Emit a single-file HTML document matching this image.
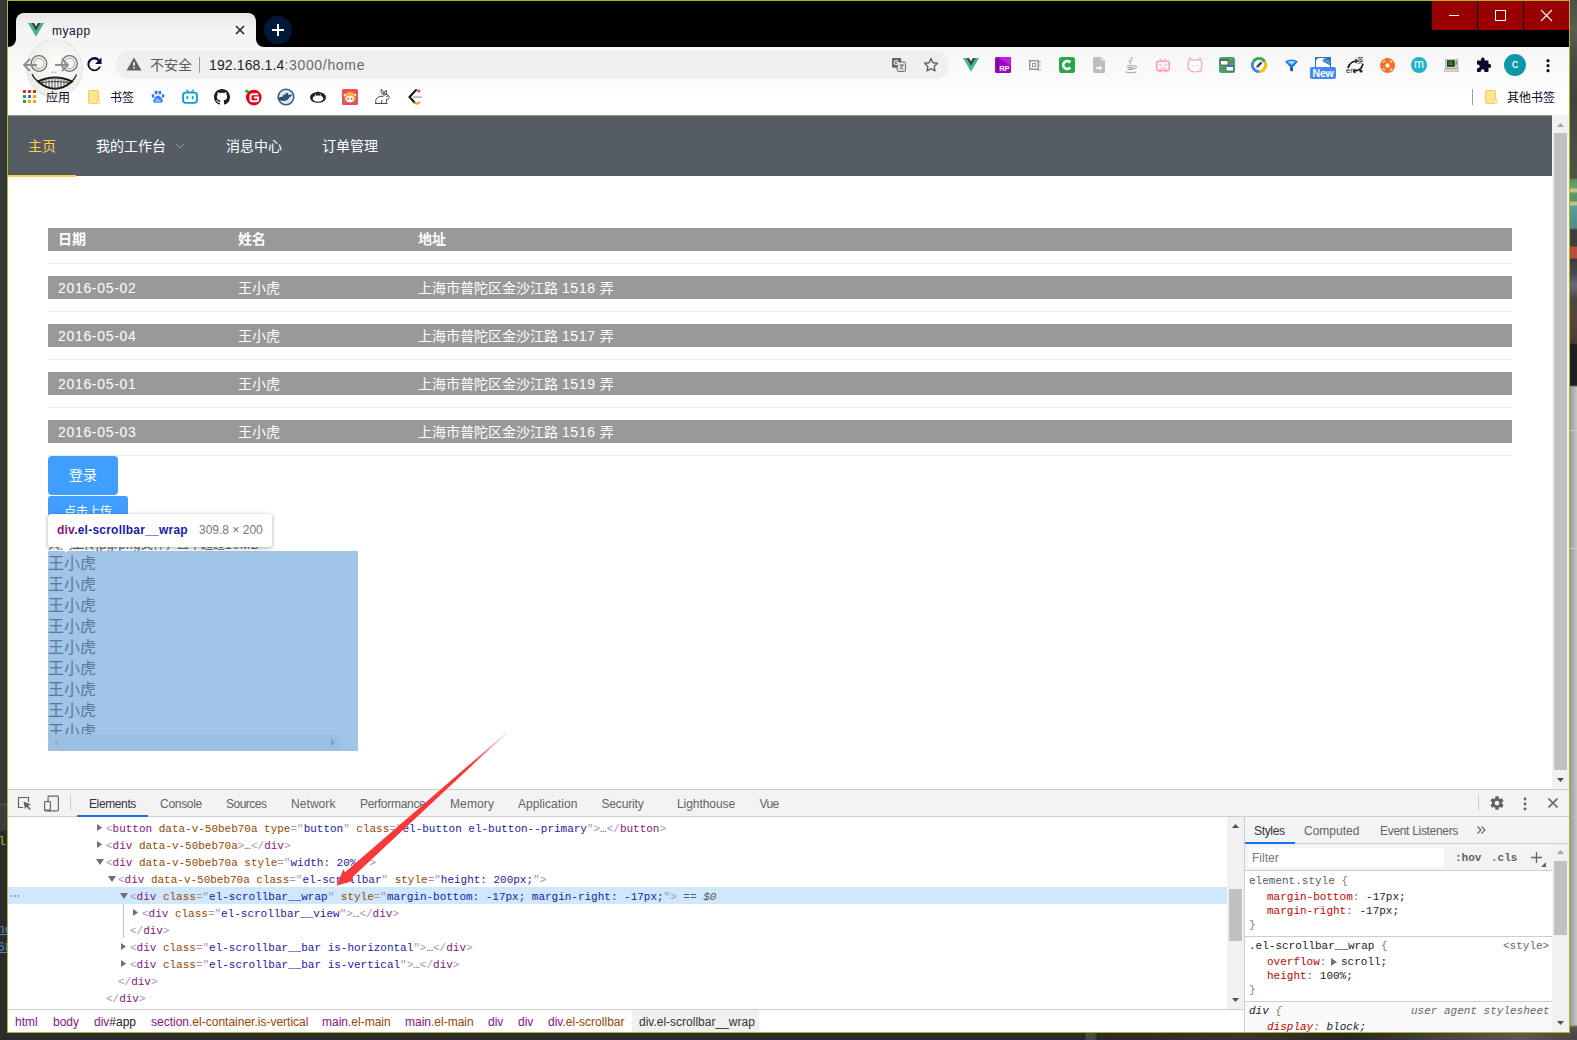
<!DOCTYPE html>
<html lang="zh-CN">
<head>
<meta charset="utf-8">
<title>myapp</title>
<style>
*{box-sizing:border-box;margin:0;padding:0}
html,body{width:1577px;height:1040px;overflow:hidden;background:#2b2b2b}
body{position:relative;font-family:"Liberation Sans","Noto Sans CJK SC",sans-serif;font-size:12px;color:#222}
.abs{position:absolute}
svg{display:block}
/* desktop */
#deskL{left:0;top:0;width:7px;height:1040px;overflow:hidden;background:linear-gradient(#36393b 0,#36393b 803px,#4a4d4f 804px,#4a4d4f 805px,#3c3f41 806px,#3c3f41 830px,#2b2b2b 831px)}
#deskR{left:1570px;top:0;width:7px;height:1040px;background:linear-gradient(#4a4e44 0,#5a5e50 30px,#474b41 60px,#3f433b 100px,#4a4e44 150px,#4e5548 178px,#5f9460 180px,#6aa067 188px,#c8c090 189px,#c8c090 192px,#5f9460 193px,#5f9460 201px,#c0c090 202px,#c0c090 205px,#58a098 206px,#4f8a88 228px,#3c3e3c 230px,#3c3e3c 246px,#b85038 247px,#b85038 258px,#3a3a3a 259px,#4a4a50 275px,#6a6a78 285px,#4a4440 300px,#5a443a 320px,#4a3a34 343px,#1e1e20 345px,#1e1e20 385px,#a9a9a9 387px,#a9a9a9 1025px,#5a5650 1027px,#3a3632 1040px)}
#deskR2{left:1570px;top:387px;width:7px;height:638px;background:linear-gradient(90deg,#9a9a9a,#c6c6c6)}
#deskB{left:0;top:1033px;width:1577px;height:7px;background:linear-gradient(90deg,#2b2b2b 0,#2b2b2b 1085px,#4a4a4a 1086px,#4a4a4a 1095px,#2e2826 1097px,#3a3430 1250px,#2a2624 1350px,#4a4540 1450px,#5e5852 1520px,#4a4540 1577px)}
#win{left:7px;top:0;width:1563px;height:1033px;border:1px solid #a9b81c;background:#fff}
/* chrome */
#titlebar{left:8px;top:1px;width:1561px;height:46px;background:#000}
#toolbar{left:8px;top:47px;width:1561px;height:68px;background:linear-gradient(#f6f6f6,#fafafa 40%,#fff 75%)}

#tab{left:16px;top:13px;width:240px;height:34px;border-radius:8px 8px 0 0;background:linear-gradient(#e6e6e6,#f3f3f3 45%,#f6f6f6)}
.foot{width:8px;height:8px;top:39px;overflow:hidden}
.foot i{position:absolute;width:16px;height:16px;border-radius:50%;background:#000;top:-8px}
#tabtitle{left:52px;top:24px;font-size:12px;line-height:14px;color:#1a1030;letter-spacing:.55px}
#newtab{left:264px;top:16px;width:28px;height:28px;border-radius:50%;background:#00193b}
.wc{top:1px;height:29px;background:#900}
#pill{left:116px;top:51px;width:833px;height:28px;border-radius:14px;background:#efefef}
.bm{font-size:12px;line-height:14px;color:#06062c;top:91px}

#page{left:8px;top:115px;width:1544px;height:674px;background:#fff;overflow:hidden;font-family:"Liberation Sans","Noto Sans CJK SC",sans-serif}
#nav{left:0;top:0;width:1544px;height:61px;background:#545c64;border-top:1px solid #8b9095}
.mi{top:0;height:61px;line-height:60px;font-size:14px;color:#fff;padding-left:20px}
.band{left:40px;width:1464px;height:23px;background:#999;color:#fff;font-size:14px;line-height:24px}
.band span{position:absolute;top:0;white-space:nowrap}
.sep{left:40px;width:1464px;height:1px;background:#ebeef5}
.c1{left:10px}.c2{left:190px}.c3{left:370px}
.num{letter-spacing:.68px}
#vsb{left:1552px;top:115px;width:17px;height:674px;background:#f1f1f1}

#dt{left:8px;top:789px;width:1561px;height:243px;background:#fff;border-top:1px solid #cbcbcb;overflow:hidden;font-size:12px}
#dtbar{left:0;top:0;width:1561px;height:27px;background:#f3f3f3;border-bottom:1px solid #cdcdcd}
.tb{top:6px;line-height:16px;color:#5f6368;white-space:nowrap;font-size:12px}
#tree{left:0;top:27px;width:1219px;height:192px;font-family:"Liberation Mono",monospace;font-size:11px;white-space:pre;overflow:hidden}
.ln{position:absolute;left:0;height:17px;line-height:17px;width:1219px}
.ln b{font-weight:normal;position:absolute;top:2px;letter-spacing:-.015px}
.t{color:#881280}.a{color:#994500}.v{color:#1a1aa8}.p{color:#a894a6}.g{color:#5a5a5a}
.tri{position:absolute;top:5px}
#crumbs{left:0;top:219px;width:1236px;height:24px;border-top:1px solid #cdcdcd;background:#fff;font-size:12px;line-height:24px}
#crumbs span{position:absolute;top:0;white-space:nowrap}
.cp{color:#881280}.co{color:#994500}
#sty{left:1236px;top:27px;width:325px;height:216px;border-left:1px solid #cdcdcd;background:#fff;overflow:hidden}
.mono{font-family:"Liberation Mono",monospace;font-size:11px;white-space:pre;position:absolute;line-height:14px}
.red{color:#c80000}
/* SECTION-CSS */
</style>
</head>
<body>
<div class="abs" id="deskL"><span class="abs" style="left:-2px;top:834px;font:13px/16px 'Liberation Mono',monospace;color:#a9b21f">ll</span><span class="abs" style="left:-3px;top:922px;font:13px/16px 'Liberation Mono',monospace;color:#4a88c7;text-decoration:underline">nd</span><span class="abs" style="left:-3px;top:940px;font:13px/16px 'Liberation Mono',monospace;color:#4a88c7;text-decoration:underline">68</span></div>
<div class="abs" id="deskR"></div><div class="abs" id="deskR2"><div class="abs" style="left:0;top:43px;width:7px;height:1px;background:#d0d0d0"></div><div class="abs" style="left:0;top:161px;width:7px;height:1px;background:#d0d0d0"></div></div>
<div class="abs" id="deskB"></div>
<div class="abs" id="win"></div>
<div class="abs" id="titlebar"></div>
<div class="abs" id="toolbar"></div>

<div class="abs" id="tab"></div>
<div class="abs foot" style="left:8px;background:#f6f6f6"><i style="left:-8px"></i></div>
<div class="abs foot" style="left:256px;background:#f6f6f6"><i style="left:0"></i></div>
<svg class="abs" style="left:28px;top:23px" width="16" height="14" viewBox="0 0 16 14"><path d="M0 0h3.2L8 8.3 12.8 0H16L8 13.8z" fill="#41b883"/><path d="M3.2 0h2.9L8 3.3 9.9 0h2.9L8 8.3z" fill="#35495e"/></svg>
<div class="abs" id="tabtitle">myapp</div>
<svg class="abs" style="left:235px;top:25px" width="10" height="10" viewBox="0 0 10 10"><path d="M1 1l8 8M9 1l-8 8" stroke="#222" stroke-width="1.5"/></svg>
<div class="abs" id="newtab"><svg width="28" height="28" viewBox="0 0 28 28"><path d="M14 8v12M8 14h12" stroke="#fff" stroke-width="2"/></svg></div>
<div class="abs wc" style="left:1432px;width:45px"><svg width="45" height="29"><path d="M17 14.5h10" stroke="#fff" stroke-width="1"/></svg></div>
<div class="abs wc" style="left:1478px;width:45px"><svg width="45" height="29"><rect x="17.5" y="9.5" width="10" height="10" fill="none" stroke="#fff" stroke-width="1"/></svg></div>
<div class="abs wc" style="left:1524px;width:45px"><svg width="45" height="29"><path d="M17 9l11 11M28 9l-11 11" stroke="#fff" stroke-width="1.1"/></svg></div>
<!-- nav buttons -->
<div class="abs" style="left:27px;top:40px;width:55px;height:57px;border-radius:50%;background:radial-gradient(circle at 55% 40%,#fcfcfa,#eeeee8 70%,#dfdfd8);box-shadow:0 0 0 .6px #d9c9d9"></div>
<svg class="abs" style="left:27px;top:40px" width="55" height="57" viewBox="0 0 55 57">
<circle cx="12" cy="23.500" r="7.800" fill="none" stroke="#6e6e6e" stroke-width="1.300"/><circle cx="12" cy="23.500" r="5.200" fill="none" stroke="#9a9a9a" stroke-width=".9"/>
<circle cx="42.500" cy="23.500" r="7.800" fill="none" stroke="#6e6e6e" stroke-width="1.300"/><circle cx="42.500" cy="23.500" r="5.200" fill="none" stroke="#9a9a9a" stroke-width=".9"/>
<path d="M5 34q2 5 6.500 7.500M49.500 34.500q-1.500 4.500-5 7" fill="none" stroke="#2a2a2a" stroke-width="1.300"/>
<path d="M11 41.500Q28 33.300 45 41.500Q28 56.100 11 41.500z" fill="#f0f0ec" stroke="#1c1c1c" stroke-width="2"/>
<path d="M16 41v3M19 40v5.500M22 39.500v7.500M25 39v8.500M28 38.500v9.500M31 39v8.500M34 39.500v7.500M37 40v5.500M40 41v3" stroke="#333" stroke-width=".8"/>
<path d="M13 42.500Q28 40.500 43 42.500" fill="none" stroke="#333" stroke-width=".9"/>
<rect x="24.800" y="31.500" width="1.600" height="1.600" fill="#a8a8b8"/><rect x="27.800" y="31.500" width="1.600" height="1.600" fill="#a8a8b8"/>
</svg>
<svg class="abs" style="left:22px;top:57px" width="16" height="16" viewBox="0 0 16 16"><path d="M15 8H2.500M8 2L2 8l6 6" fill="none" stroke="#8c8c9c" stroke-width="1.800"/></svg>
<svg class="abs" style="left:54px;top:57px" width="16" height="16" viewBox="0 0 16 16"><path d="M1 8h12.500M8 2l6 6-6 6" fill="none" stroke="#8c8c9c" stroke-width="1.800"/></svg>
<svg class="abs" style="left:86px;top:56px" width="16" height="17" viewBox="0 0 16 17"><path d="M13.600 3.400A7 7 0 1 0 15 10.500h-2A5 5 0 1 1 12 5l-3 3h6.500V1.500z" fill="#0b0b2d"/></svg>
<div class="abs" id="pill"></div>
<svg class="abs" style="left:126px;top:57px" width="16" height="14" viewBox="0 0 16 14"><path d="M8 .5l7.500 13H.5z" fill="#5f6368"/><rect x="7.200" y="5" width="1.600" height="4" fill="#efefef"/><rect x="7.200" y="10" width="1.600" height="1.600" fill="#efefef"/></svg>
<div class="abs" style="left:150px;top:56px;font-size:14px;line-height:18px;color:#5a5a5a">不安全</div>
<div class="abs" style="left:199px;top:57px;width:1px;height:16px;background:#999"></div>
<div class="abs" style="left:209px;top:56px;font-size:14px;line-height:18px;color:#222;letter-spacing:.13px">192.168.1.4<span style="color:#6a6a6a;letter-spacing:.68px">:3000/home</span></div>

<!-- omnibox right icons -->
<svg class="abs" style="left:892px;top:58px" width="14" height="14" viewBox="0 0 16 16"><rect x="0" y="0" width="10.500" height="11" rx="1.500" fill="#5f6368"/><rect x="6" y="4.500" width="9.500" height="11" rx="1.500" fill="#e4e4e4" stroke="#5f6368" stroke-width="1.100"/><text x="1.800" y="8.500" font-size="7.500" font-weight="bold" fill="#fff" font-family="Liberation Sans,sans-serif">G</text><path d="M8.500 8h5M11 7v1M9 13.500l3.500-5.500M9.500 9l3.500 4.500" stroke="#5f6368" stroke-width="1" fill="none"/></svg>
<svg class="abs" style="left:923px;top:57px" width="16" height="16" viewBox="0 0 18 18"><path d="M9 1.800l2.200 4.700 5.100.600-3.800 3.500 1 5-4.500-2.500-4.500 2.500 1-5L1.700 7.100l5.100-.600z" fill="none" stroke="#5f6368" stroke-width="1.600" stroke-linejoin="round"/></svg>
<!-- extensions -->
<svg class="abs" style="left:963px;top:58px" width="16" height="14" viewBox="0 0 16 14"><path d="M0 0h3.200L8 8.300 12.800 0H16L8 13.800z" fill="#41b883"/><path d="M3.200 0h2.900L8 3.300 9.900 0h2.900L8 8.300z" fill="#35495e"/></svg>
<svg class="abs" style="left:995px;top:57px" width="16" height="16" viewBox="0 0 16 16"><rect width="16" height="16" rx="1.500" fill="#a305c4"/><path d="M3 0h13v9z" fill="#c21fe0"/><rect x="2.200" y="0" width="1" height="16" fill="#5a0070"/><text x="4.200" y="14" font-size="7.500" font-weight="bold" fill="#fff" font-family="Liberation Sans,sans-serif">RP</text></svg>
<svg class="abs" style="left:1029px;top:59px" width="13" height="12" viewBox="0 0 13 12"><rect x=".750" y="1.750" width="8.500" height="8.500" fill="none" stroke="#9a9a9a" stroke-width="1.500"/><rect x="3.500" y="4.500" width="3" height="3" fill="none" stroke="#9a9a9a" stroke-width="1"/><path d="M11 2v2M11 5.500v1.500M8 11h4" stroke="#aaa" stroke-width="1.200"/></svg>
<svg class="abs" style="left:1059px;top:57px" width="16" height="16" viewBox="0 0 16 16"><rect width="16" height="16" rx="2.800" fill="#2aa64b"/><path d="M12.300 4.600A5.300 5.300 0 1 0 12.300 11.400L10.100 9.600A2.500 2.500 0 1 1 10.100 6.400z" fill="#fff"/><circle cx="8" cy="8" r="1" fill="#2aa64b"/></svg>
<svg class="abs" style="left:1093px;top:57px" width="12" height="16" viewBox="0 0 12 16"><path d="M0 1.500Q0 0 1.500 0H8l4 4v10.500q0 1.500-1.500 1.500h-9Q0 16 0 14.500z" fill="#bdbdbd"/><path d="M8 0l4 4H8z" fill="#dedede"/><path d="M3 10h3.500V8l3 3-3 3v-2H3z" fill="#f4f4f4"/></svg>
<svg class="abs" style="left:1124px;top:56px" width="14" height="18" viewBox="0 0 14 18"><path d="M7.500 1q1.800 2-.500 3.800t-.300 3.400M5.500 3.500q1.200 1.600-.300 3" fill="none" stroke="#a8a8a8" stroke-width="1"/><path d="M3 9.800h7.500q2.300 0 1.800 1.600t-2.300 1M3.200 11.600h6.600M3.800 13.400h5.400" fill="none" stroke="#a8a8a8" stroke-width="1.100"/><path d="M1.500 15.800q5.500 1.800 11 0" fill="none" stroke="#b4b4b4" stroke-width="1.300"/></svg>
<svg class="abs" style="left:1155px;top:57px" width="16" height="16" viewBox="0 0 16 16"><path d="M5 1.200L7.200 4M11 1.200L8.800 4" stroke="#ff9fb8" stroke-width="1" fill="none"/><rect x="1.700" y="4.200" width="12.600" height="9.300" rx="1.800" fill="#fff5f8" stroke="#ff8fab" stroke-width="1.300"/><path d="M4.300 7.600l2.300.800M11.700 7.600l-2.300.800M5.500 11q1.200 1 2.500 0q1.300 1 2.500 0" stroke="#ff8fab" stroke-width=".9" fill="none"/><path d="M4 14.800h2M10 14.800h2" stroke="#ff8fab" stroke-width="1.100"/></svg>
<svg class="abs" style="left:1186px;top:56px" width="18" height="18" viewBox="0 0 18 18"><path d="M3.800 2.200Q5 3 6.200 4.300q2.800-1 5.600 0Q13 3 14.200 2.200q1.800 3.300 1.700 7.300.100 6.500-6.900 6.500T2.100 9.500Q2 5.500 3.800 2.200z" fill="#fff" stroke="#ff9db5" stroke-width="1.200" stroke-linejoin="round"/><path d="M5.300 9.300l2.300.400M12.700 9.300l-2.300.400" stroke="#ffb3c6" stroke-width=".9"/><circle cx="15.300" cy="15.300" r=".8" fill="#ff9db5"/></svg>
<svg class="abs" style="left:1219px;top:57px" width="16" height="16" viewBox="0 0 16 16"><rect width="16" height="16" rx="2.500" fill="#3aa76d"/><rect x="1.500" y="2.500" width="7.500" height="5.500" fill="#fff" stroke="#555" stroke-width=".8"/><rect x="1.500" y="2.500" width="7.500" height="1.500" fill="#666"/><rect x="7" y="8.500" width="7.500" height="5.500" fill="#fff" stroke="#555" stroke-width=".8"/><rect x="7" y="8.500" width="7.500" height="1.500" fill="#3b6fd6"/><path d="M10.500 4.500h4M2 11.500h4" stroke="#e33" stroke-width="1.200"/></svg>
<svg class="abs" style="left:1250px;top:56px" width="18" height="18" viewBox="0 0 18 18"><circle cx="9" cy="9" r="6.600" fill="#fff"/><path d="M3.280 5.700A6.600 6.600 0 0 1 14.720 5.700" fill="none" stroke="#34a853" stroke-width="2.900"/><path d="M14.720 5.700A6.600 6.600 0 0 1 9 15.600" fill="none" stroke="#fbbc05" stroke-width="2.900"/><path d="M9 15.600A6.600 6.600 0 0 1 3.280 5.700" fill="none" stroke="#4285f4" stroke-width="2.900"/><path d="M6.200 11.800l.6-2.200 4-4 1.600 1.600-4 4z" fill="#3c4043"/></svg>
<svg class="abs" style="left:1285px;top:59px" width="13" height="13" viewBox="0 0 13 13"><path d="M0 2.500Q6.500-1.500 13 2.500L7.600 8.500V12.500L5.400 11.500V8.500z" fill="#1877d8"/><path d="M2.500 2.800Q6.500.500 10.500 2.800L6.500 6z" fill="#9fd0ff"/><path d="M5.400 8.500h2.200v4l-2.200-1z" fill="#0a3f8a"/></svg>
<svg class="abs" style="left:1315px;top:57px" width="16" height="10" viewBox="0 0 16 10"><rect width="16" height="10" fill="#2b76ba"/><path d="M1 10V4.500Q1 1 5 1h6Q6.500 2.500 8 4.500q3 1.500 7 4V10z" fill="#fdfdfd"/><path d="M7 3.500q4-2 7.800 0V8Q12 4.500 7 3.500z" fill="#4e9ad4"/></svg>
<div class="abs" style="left:1310px;top:67px;width:26px;height:12px;border-radius:2px;background:#4688f1;color:#fff;font-size:10.500px;font-weight:bold;line-height:12px;text-align:center;letter-spacing:-.2px">New</div>
<svg class="abs" style="left:1346px;top:56px" width="19" height="19" viewBox="0 0 19 19"><path d="M2 12q2-7 9-7M17 8q-2 7-9 7" fill="none" stroke="#111" stroke-width="1.600"/><path d="M9.500 3l2 2-2 2M9.500 13l-2 2 2 2" fill="none" stroke="#222" stroke-width="1.100"/><text x="0" y="17" font-size="7.500" fill="#222" font-family="Liberation Sans,sans-serif">en</text><text x="11" y="6.500" font-size="6.500" fill="#222" font-family="Liberation Sans,Noto Sans CJK SC,sans-serif">英</text><circle cx="15" cy="15" r="1.600" fill="#222"/></svg>
<svg class="abs" style="left:1379.500px;top:57.500px" width="15" height="15" viewBox="0 0 15 15"><circle cx="7.500" cy="7.500" r="7.500" fill="#f36f21"/><circle cx="7.500" cy="7.500" r="2.300" fill="#fdeee4"/><path d="M3.200 4.300l1.300-1.300M10.500 3l1.300 1.300M3.200 10.700l1.300 1.300M10.500 12l1.300-1.300" stroke="#fde4d4" stroke-width="1.500" stroke-linecap="round"/></svg>
<div class="abs" style="left:1411px;top:57px;width:16px;height:16px;border-radius:50%;background:#1cb4c6;color:#fff;font-size:12px;line-height:14px;text-align:center">m</div>
<svg class="abs" style="left:1443.500px;top:58.500px" width="15.500" height="13.800" viewBox="0 0 18 16"><rect x="2" y="0" width="14" height="11" fill="#d4d0be" stroke="#8a8675" stroke-width=".6"/><rect x="3.500" y="1.500" width="9" height="7.500" fill="#1d3b1d"/><path d="M5 4h4.500M5 6h5.500" stroke="#4cd04c" stroke-width=".9"/><path d="M1 11.500h16l1 3.500H0z" fill="#dedacb" stroke="#8a8675" stroke-width=".5"/><rect x="13.500" y="2.500" width="1.500" height="4" fill="#8a8675"/></svg>
<svg class="abs" style="left:1475px;top:57px" width="16" height="17" viewBox="0 0 16 17"><path d="M6 2.200a1.800 1.800 0 0 1 3.600 0V3.500h3.200q.7 0 .7.700v2.800h.8a1.900 1.900 0 0 1 0 3.800h-.8v3.500q0 .7-.7.700H9.500v-.8a1.900 1.900 0 0 0-3.800 0v.8H2.700q-.7 0-.7-.700v-3.100h.8a1.900 1.900 0 0 0 0-3.800H2V4.200q0-.7.700-.7H6z" fill="#0a0a2e"/></svg>
<div class="abs" style="left:1504px;top:54px;width:22px;height:22px;border-radius:50%;background:#0d97a7;color:#fff;font-size:13px;line-height:20px;text-align:center">c</div>
<svg class="abs" style="left:1545px;top:58px" width="6" height="16" viewBox="0 0 6 16"><circle cx="3" cy="2.700" r="1.600" fill="#0a0a2e"/><circle cx="3" cy="7.700" r="1.600" fill="#0a0a2e"/><circle cx="3" cy="12.700" r="1.600" fill="#0a0a2e"/></svg>

<!-- bookmarks -->
<svg class="abs" style="left:23px;top:90px" width="13" height="13" viewBox="0 0 13 13"><g><rect x="0" y="0" width="3" height="3" fill="#ea2a1c"/><rect x="5" y="0" width="3" height="3" fill="#ea2a1c"/><rect x="10" y="0" width="3" height="3" fill="#ea2a1c"/><rect x="0" y="5" width="3" height="3" fill="#2e9b47"/><rect x="5" y="5" width="3" height="3" fill="#1f7de6"/><rect x="10" y="5" width="3" height="3" fill="#f4a70e"/><rect x="0" y="10" width="3" height="3" fill="#2e9b47"/><rect x="5" y="10" width="3" height="3" fill="#f4a70e"/><rect x="10" y="10" width="3" height="3" fill="#f4a70e"/></g></svg>
<div class="abs bm" style="left:46px">应用</div>
<svg class="abs" style="left:88px;top:90px" width="12" height="14" viewBox="0 0 12 14"><path d="M.500 1.500Q.500.500 1.500.500h8q1 0 1 1v11q0 1-1 1h-8q-1 0-1-1z" fill="#fde595" stroke="#f5cd5a" stroke-width="1"/><rect x="9" y="9.500" width="2.500" height="4" fill="#fff3c0" stroke="#f5cd5a" stroke-width=".7"/></svg>
<div class="abs bm" style="left:110px">书签</div>
<svg class="abs" style="left:151px;top:90px" width="14" height="14" viewBox="0 0 16 16"><g fill="#2f7bf5"><ellipse cx="5.800" cy="2.800" rx="1.700" ry="2.300"/><ellipse cx="10.200" cy="2.800" rx="1.700" ry="2.300"/><ellipse cx="2.300" cy="6.800" rx="1.600" ry="2.100" transform="rotate(-20 2.300 6.800)"/><ellipse cx="13.700" cy="6.800" rx="1.600" ry="2.100" transform="rotate(20 13.700 6.800)"/><path d="M8 6.200c2 0 2.600 1.800 4 3.200s2 2.600 1 4.200-3.200.9-5 .9-4 .7-5-.9 0-2.800 1-4.200S6 6.200 8 6.200z"/></g><text x="4.600" y="13.300" font-size="5.500" fill="#fff" font-family="Liberation Sans,sans-serif">du</text></svg>
<svg class="abs" style="left:182px;top:89px" width="16" height="15.200" viewBox="0 0 18 17"><path d="M5 .800L7.500 3.800M13 .800L10.500 3.800" stroke="#00a1d6" stroke-width="1.500" fill="none"/><rect x="1.200" y="4" width="15.600" height="11.500" rx="2.800" fill="#fff" stroke="#00a1d6" stroke-width="2"/><rect x="5" y="8" width="2" height="3.200" fill="#00a1d6"/><rect x="11" y="8" width="2" height="3.200" fill="#00a1d6"/></svg>
<svg class="abs" style="left:214px;top:89px" width="16" height="16" viewBox="0 0 16 16"><path fill="#1b1f23" d="M8 0C3.580 0 0 3.580 0 8c0 3.540 2.290 6.530 5.470 7.590.4.070.55-.17.550-.38 0-.19-.010-.82-.010-1.490-2.010.37-2.530-.49-2.690-.94-.09-.23-.48-.94-.82-1.130-.28-.15-.68-.52-.010-.53.630-.010 1.080.58 1.230.82.720 1.210 1.870.87 2.330.66.070-.52.280-.87.510-1.070-1.780-.2-3.640-.89-3.640-3.950 0-.87.310-1.590.82-2.150-.08-.2-.36-1.020.08-2.120 0 0 .67-.21 2.200.82.640-.18 1.320-.27 2-.27s1.360.09 2 .27c1.530-1.040 2.200-.82 2.200-.82.440 1.100.16 1.920.08 2.120.51.560.82 1.270.82 2.150 0 3.070-1.870 3.750-3.650 3.950.29.250.54.730.54 1.480 0 1.070-.010 1.930-.010 2.200 0 .21.150.46.550.38A8.013 8.013 0 0 0 16 8c0-4.420-3.580-8-8-8z"/></svg>
<svg class="abs" style="left:244px;top:88px" width="18" height="18" viewBox="0 0 18 18"><circle cx="9.800" cy="9.600" r="7.800" fill="#e1001a"/><path d="M14.300 6.200H8.200q-1.700 0-1.700 1.700v3.600q0 1.700 1.700 1.700h4.200q1.700 0 1.700-1.700V9.600H10" fill="none" stroke="#fff" stroke-width="2"/><circle cx="3" cy="3.200" r="1.800" fill="#19c22a"/></svg>
<svg class="abs" style="left:277px;top:88px" width="18" height="18" viewBox="0 0 18 18"><circle cx="9" cy="9" r="7.800" fill="#dfe7ee" stroke="#3b5a73" stroke-width="1.500"/><path d="M2.500 9.500q1-1 3-.500l1-2.500h2l.500-1.500h2v1.500l1.500.500q1.500-1 2.500.500-1 1.500-2.500 1.500-1.500 4-6 4-4.500 0-6.500-3.500z" fill="#31526c"/></svg>
<svg class="abs" style="left:309px;top:88px" width="18" height="18" viewBox="0 0 18 18"><ellipse cx="9" cy="9.400" rx="8" ry="5.400" fill="#222"/><path d="M6.500 5.500Q9 1.500 11.500 5.500z" fill="#222"/><ellipse cx="9" cy="10.500" rx="5.300" ry="3.100" fill="#fff"/><circle cx="6.500" cy="7" r=".700" fill="#fff"/><circle cx="11.500" cy="7" r=".700" fill="#fff"/></svg>
<svg class="abs" style="left:342px;top:89px" width="16" height="16" viewBox="0 0 16 16"><rect width="16" height="16" rx="1.500" fill="#f2495c"/><path d="M2.500 9.500Q2 3.500 8 3t5.500 6.500Q12 13.500 8 13.500T2.500 9.500z" fill="#ffb52e"/><ellipse cx="8" cy="10" rx="3.800" ry="3.300" fill="#fff3e6"/><circle cx="6.300" cy="9.800" r=".700" fill="#333"/><circle cx="9.700" cy="9.800" r=".700" fill="#333"/><circle cx="2.800" cy="6" r="1.500" fill="#fff" stroke="#e33" stroke-width=".5"/><circle cx="13.200" cy="6" r="1.500" fill="#fff" stroke="#e33" stroke-width=".5"/><path d="M2 11.500h1.500v2H2zM12.500 11.500H14v2h-1.500z" fill="#35b6e8"/></svg>
<svg class="abs" style="left:373px;top:88px" width="18" height="18" viewBox="0 0 18 18"><g fill="#fff" stroke="#4a4a4a" stroke-width="1" stroke-linejoin="round"><path d="M9.500 6.500Q7.500 3 8.200 1.300q2.300 1.500 3 4.700z"/><path d="M11.500 6Q11.500 3 13 2q1.200 2.200.200 4.600z"/><path d="M3 15.500Q1.500 12 4.500 9.500 7 7.500 10 8.500q1.500-2.500 4-2 2.500.800 2.300 3-.300 1.800-2.800 2 .500 2.500-1 4z"/><path d="M2 15.500h12.500M8 15.500q1.500-1.500.500-3.500"/></g><circle cx="14" cy="8.500" r=".700" fill="#333"/></svg>
<svg class="abs" style="left:406.500px;top:88px" width="16" height="18" viewBox="0 0 16 18"><path d="M9 2L2.500 9l5.500 6" fill="none" stroke="#111" stroke-width="2" stroke-linecap="round"/><path d="M8 15q2.200 1.800 4.500-.800" fill="none" stroke="#f4a21a" stroke-width="2" stroke-linecap="round"/><path d="M6.500 9.200h7.500" stroke="#b9b9b9" stroke-width="1.700" stroke-linecap="round"/><circle cx="11.800" cy="3" r="1.700" fill="#e8554e"/></svg>
<div class="abs" style="left:1472px;top:89px;width:1px;height:16px;background:#9a9ab0"></div>
<svg class="abs" style="left:1485px;top:90px" width="12" height="14" viewBox="0 0 12 14"><path d="M.500 1.500Q.500.500 1.500.500h8q1 0 1 1v11q0 1-1 1h-8q-1 0-1-1z" fill="#fde595" stroke="#f5cd5a" stroke-width="1"/><rect x="9" y="9.500" width="2.500" height="4" fill="#fff3c0" stroke="#f5cd5a" stroke-width=".7"/></svg>
<div class="abs bm" style="left:1507px">其他书签</div>



<div class="abs" id="page">
<div class="abs" id="nav">
<div class="abs mi" style="left:0;width:68px;color:#ffd04b;border-bottom:2px solid #ffd04b">主页</div>
<div class="abs mi" style="left:68px;width:130px">我的工作台<svg class="abs" style="left:99px;top:27px" width="10" height="6" viewBox="0 0 10 6"><path d="M1 1l4 4 4-4" fill="none" stroke="#8e959c" stroke-width="1"/></svg></div>
<div class="abs mi" style="left:198px;width:96px">消息中心</div>
<div class="abs mi" style="left:294px;width:96px">订单管理</div>
</div>
<div class="abs band" style="top:113px;font-weight:bold;line-height:23px"><span class="c1">日期</span><span class="c2">姓名</span><span class="c3">地址</span></div>
<div class="abs sep" style="top:148px"></div>
<div class="abs band" style="top:161px"><span class="c1 num">2016-05-02</span><span class="c2">王小虎</span><span class="c3">上海市普陀区金沙江路 <span class="num" style="position:static">1518</span> 弄</span></div>
<div class="abs sep" style="top:196px"></div>
<div class="abs band" style="top:209px"><span class="c1 num">2016-05-04</span><span class="c2">王小虎</span><span class="c3">上海市普陀区金沙江路 <span class="num" style="position:static">1517</span> 弄</span></div>
<div class="abs sep" style="top:244px"></div>
<div class="abs band" style="top:257px"><span class="c1 num">2016-05-01</span><span class="c2">王小虎</span><span class="c3">上海市普陀区金沙江路 <span class="num" style="position:static">1519</span> 弄</span></div>
<div class="abs sep" style="top:292px"></div>
<div class="abs band" style="top:305px"><span class="c1 num">2016-05-03</span><span class="c2">王小虎</span><span class="c3">上海市普陀区金沙江路 <span class="num" style="position:static">1516</span> 弄</span></div>
<div class="abs sep" style="top:340px"></div>

<div class="abs" style="left:40px;top:341px;width:70px;height:39px;border-radius:4px;background:#409eff;color:#fff;font-size:14px;line-height:38px;text-align:center">登录</div>
<div class="abs" style="left:40px;top:381px;width:80px;height:32px;border-radius:3px;background:#409eff;color:#fff;font-size:12px;line-height:33px;text-align:center">点击上传</div>
<div class="abs" style="left:40px;top:422px;font-size:12px;line-height:16px;color:#606266;white-space:nowrap">只能上传<span style="letter-spacing:.8px">jpg/png</span>文件，且不超过<span style="letter-spacing:.8px">10MB</span></div>
<!-- highlighted scroll area -->
<div class="abs" style="left:40px;top:436px;width:310px;height:200px;background:#a0c5e8;overflow:hidden;font-size:16px;color:#5c7894;padding-top:1.500px">
<div style="height:21px;line-height:21px">王小虎</div><div style="height:21px;line-height:21px">王小虎</div><div style="height:21px;line-height:21px">王小虎</div><div style="height:21px;line-height:21px">王小虎</div><div style="height:21px;line-height:21px">王小虎</div><div style="height:21px;line-height:21px">王小虎</div><div style="height:21px;line-height:21px">王小虎</div><div style="height:21px;line-height:21px">王小虎</div><div style="height:21px;line-height:21px">王小虎</div>
<div class="abs" style="left:0;top:183px;width:293px;height:17px;background:#9dc0e2"></div>
<svg class="abs" style="left:6px;top:188px" width="4" height="7" viewBox="0 0 4 7"><path d="M4 0v7L0 3.500z" fill="#8fb0d4"/></svg>
<svg class="abs" style="left:283px;top:188px" width="4" height="7" viewBox="0 0 4 7"><path d="M0 0v7l4-3.500z" fill="#7f9cbc"/></svg>
</div>
<!-- tooltip -->
<div class="abs" style="left:40px;top:399px;width:224px;height:33px;border-radius:3px;background:#fff;box-shadow:0 1px 4px rgba(0,0,0,.35);font-size:12px;line-height:32px;white-space:nowrap"><span class="abs" style="left:9px;color:#881280;font-weight:bold;letter-spacing:.23px">div<span style="color:#1a1aa6">.el-scrollbar__wrap</span></span><span class="abs" style="left:151px;color:#777">309.8 × 200</span></div>
<div class="abs" style="left:54px;top:428px;width:8px;height:8px;background:#fff;transform:rotate(45deg)"></div>
</div>
<div class="abs" id="vsb">
<svg class="abs" style="left:5px;top:8px" width="7" height="4" viewBox="0 0 9 5"><path d="M0 5L4.500 0 9 5z" fill="#a3a3a3"/></svg>
<div class="abs" style="left:2px;top:18px;width:13px;height:637px;background:#c1c1c1"></div>
<svg class="abs" style="left:5px;top:663px" width="7" height="4" viewBox="0 0 9 5"><path d="M0 0l4.500 5L9 0z" fill="#505050"/></svg>
</div>


<div class="abs" id="dt">
<div class="abs" id="dtbar">
<svg class="abs" style="left:9px;top:6px" width="16" height="16" viewBox="0 0 16 16"><path d="M11.500 6V1.500h-10v10H6" fill="none" stroke="#5f6368" stroke-width="1.200"/><path d="M6.500 5.500l7.500 3-3 1.200 2.800 3.300-1.300 1.100-2.800-3.400-1.700 2.600z" fill="#5f6368"/></svg>
<svg class="abs" style="left:36px;top:5px" width="16" height="18" viewBox="0 0 16 18"><rect x="4.100" y="1.100" width="10.300" height="14.800" rx=".8" fill="none" stroke="#66696d" stroke-width="1.200"/><rect x=".600" y="6.600" width="5.800" height="9.300" rx=".8" fill="#f3f3f3" stroke="#66696d" stroke-width="1.200"/><rect x=".600" y="14.500" width="5.800" height="1.500" fill="#66696d"/></svg>
<div class="abs" style="left:62px;top:5px;width:1px;height:16px;background:#ccc"></div>
<span class="abs tb" style="left:81px;color:#333;letter-spacing:-0.38px">Elements</span><span class="abs tb" style="left:152px;letter-spacing:-0.29px">Console</span><span class="abs tb" style="left:218px;letter-spacing:-0.50px">Sources</span><span class="abs tb" style="left:283px;letter-spacing:0.07px">Network</span><span class="abs tb" style="left:352px;letter-spacing:-0.29px">Performance</span><span class="abs tb" style="left:442px;letter-spacing:0.12px">Memory</span><span class="abs tb" style="left:510px;letter-spacing:0.07px">Application</span><span class="abs tb" style="left:593.5px;letter-spacing:-0.17px">Security</span><span class="abs tb" style="left:669px;letter-spacing:-0.07px">Lighthouse</span><span class="abs tb" style="left:751.5px;letter-spacing:-0.63px">Vue</span>
<div class="abs" style="left:69px;top:25px;width:71px;height:2px;background:#1a73e8"></div>
<div class="abs" style="left:1470px;top:5px;width:1px;height:16px;background:#ccc"></div>
<svg class="abs" style="left:1481px;top:5px" width="16" height="16" viewBox="0 0 24 24"><path fill="#5f6368" d="M19.430 12.980c.040-.320.070-.640.070-.980s-.030-.660-.070-.980l2.110-1.650c.190-.150.240-.420.120-.640l-2-3.460c-.120-.220-.390-.300-.610-.220l-2.490 1c-.520-.400-1.080-.730-1.690-.980l-.380-2.650C14.460 2.180 14.250 2 14 2h-4c-.250 0-.460.180-.490.420l-.380 2.650c-.610.250-1.170.590-1.690.980l-2.490-1c-.230-.090-.490 0-.610.220l-2 3.460c-.130.220-.070.490.120.640l2.110 1.650c-.040.320-.070.650-.070.980s.030.660.070.980l-2.110 1.650c-.190.150-.240.420-.120.640l2 3.460c.120.220.390.300.610.220l2.490-1c.520.400 1.080.730 1.690.980l.380 2.650c.030.240.240.420.490.420h4c.250 0 .460-.180.490-.420l.380-2.650c.610-.250 1.170-.590 1.690-.980l2.490 1c.230.090.490 0 .610-.220l2-3.460c.120-.220.070-.490-.120-.640l-2.110-1.650zM12 15.500c-1.930 0-3.500-1.570-3.500-3.500s1.570-3.500 3.500-3.500 3.500 1.570 3.500 3.500-1.570 3.500-3.500 3.500z"/></svg>
<svg class="abs" style="left:1515px;top:6.500px" width="4" height="14" viewBox="0 0 4 14"><circle cx="2" cy="2" r="1.400" fill="#5f6368"/><circle cx="2" cy="7" r="1.400" fill="#5f6368"/><circle cx="2" cy="12" r="1.400" fill="#5f6368"/></svg>
<svg class="abs" style="left:1540px;top:8px" width="10" height="10" viewBox="0 0 10 10"><path d="M.500 .500l9 9M9.500 .500l-9 9" stroke="#66696d" stroke-width="1.600"/></svg>
</div>
<div class="abs" id="tree">
<div class="ln" style="top:2px"><svg class="tri" style="left:89px" width="5" height="7" viewBox="0 0 5 7"><path d="M0 0l5 3.500-5 3.500z" fill="#6e6e6e"/></svg><b style="left:98px"><span class="p">&lt;</span><span class="t">button</span><span class="a"> data-v-50beb70a</span><span class="a"> type</span><span class="p">="</span><span class="v">button</span><span class="p">"</span><span class="a"> class</span><span class="p">="</span><span class="v">el-button el-button--primary</span><span class="p">"</span><span class="p">&gt;</span><span class="g">…</span><span class="p">&lt;/</span><span class="t">button</span><span class="p">&gt;</span></b></div>
<div class="ln" style="top:19px"><svg class="tri" style="left:89px" width="5" height="7" viewBox="0 0 5 7"><path d="M0 0l5 3.500-5 3.500z" fill="#6e6e6e"/></svg><b style="left:98px"><span class="p">&lt;</span><span class="t">div</span><span class="a"> data-v-50beb70a</span><span class="p">&gt;</span><span class="g">…</span><span class="p">&lt;/</span><span class="t">div</span><span class="p">&gt;</span></b></div>
<div class="ln" style="top:36px"><svg class="tri" style="left:88px;top:6px" width="8" height="6" viewBox="0 0 8 6"><path d="M0 0h8L4 6z" fill="#6e6e6e"/></svg><b style="left:98px"><span class="p">&lt;</span><span class="t">div</span><span class="a"> data-v-50beb70a</span><span class="a"> style</span><span class="p">="</span><span class="v">width: 20%;</span><span class="p">"</span><span class="p">&gt;</span></b></div>
<div class="ln" style="top:53px"><svg class="tri" style="left:100px;top:6px" width="8" height="6" viewBox="0 0 8 6"><path d="M0 0h8L4 6z" fill="#6e6e6e"/></svg><b style="left:110px"><span class="p">&lt;</span><span class="t">div</span><span class="a"> data-v-50beb70a</span><span class="a"> class</span><span class="p">="</span><span class="v">el-scrollbar</span><span class="p">"</span><span class="a"> style</span><span class="p">="</span><span class="v">height: 200px;</span><span class="p">"</span><span class="p">&gt;</span></b></div>
<div class="ln" style="top:70px;background:#cfe8fc"><svg class="tri" style="left:112px;top:6px" width="8" height="6" viewBox="0 0 8 6"><path d="M0 0h8L4 6z" fill="#6e6e6e"/></svg><b style="left:122px"><span class="p">&lt;</span><span class="t">div</span><span class="a"> class</span><span class="p">="</span><span class="v">el-scrollbar__wrap</span><span class="p">"</span><span class="a"> style</span><span class="p">="</span><span class="v">margin-bottom: -17px; margin-right: -17px;</span><span class="p">"</span><span class="p">&gt;</span><span class="g"> == </span><span class="g" style="font-style:italic">$0</span></b></div>
<div class="ln" style="top:87px"><svg class="tri" style="left:125px" width="5" height="7" viewBox="0 0 5 7"><path d="M0 0l5 3.500-5 3.500z" fill="#6e6e6e"/></svg><b style="left:134px"><span class="p">&lt;</span><span class="t">div</span><span class="a"> class</span><span class="p">="</span><span class="v">el-scrollbar__view</span><span class="p">"</span><span class="p">&gt;</span><span class="g">…</span><span class="p">&lt;/</span><span class="t">div</span><span class="p">&gt;</span></b></div>
<div class="ln" style="top:104px"><b style="left:122px"><span class="p">&lt;/</span><span class="t">div</span><span class="p">&gt;</span></b></div>
<div class="ln" style="top:121px"><svg class="tri" style="left:113px" width="5" height="7" viewBox="0 0 5 7"><path d="M0 0l5 3.500-5 3.500z" fill="#6e6e6e"/></svg><b style="left:122px"><span class="p">&lt;</span><span class="t">div</span><span class="a"> class</span><span class="p">="</span><span class="v">el-scrollbar__bar is-horizontal</span><span class="p">"</span><span class="p">&gt;</span><span class="g">…</span><span class="p">&lt;/</span><span class="t">div</span><span class="p">&gt;</span></b></div>
<div class="ln" style="top:138px"><svg class="tri" style="left:113px" width="5" height="7" viewBox="0 0 5 7"><path d="M0 0l5 3.500-5 3.500z" fill="#6e6e6e"/></svg><b style="left:122px"><span class="p">&lt;</span><span class="t">div</span><span class="a"> class</span><span class="p">="</span><span class="v">el-scrollbar__bar is-vertical</span><span class="p">"</span><span class="p">&gt;</span><span class="g">…</span><span class="p">&lt;/</span><span class="t">div</span><span class="p">&gt;</span></b></div>
<div class="ln" style="top:155px"><b style="left:110px"><span class="p">&lt;/</span><span class="t">div</span><span class="p">&gt;</span></b></div>
<div class="ln" style="top:172px"><b style="left:98px"><span class="p">&lt;/</span><span class="t">div</span><span class="p">&gt;</span></b></div>

<div class="abs" style="left:115px;top:87px;width:1px;height:34px;background:#a9c7e8"></div>
<svg class="abs" style="left:2px;top:77px" width="10" height="4" viewBox="0 0 10 4"><circle cx="1.500" cy="2" r=".9" fill="#8a8a8a"/><circle cx="5" cy="2" r=".9" fill="#8a8a8a"/><circle cx="8.500" cy="2" r=".9" fill="#8a8a8a"/></svg>
</div>
<!-- tree scrollbar -->
<div class="abs" style="left:1219px;top:27px;width:17px;height:192px;background:#f1f1f1">
<svg class="abs" style="left:5px;top:7px" width="7" height="4" viewBox="0 0 9 5"><path d="M0 5L4.500 0 9 5z" fill="#505050"/></svg>
<div class="abs" style="left:2px;top:72px;width:13px;height:52px;background:#c1c1c1"></div>
<svg class="abs" style="left:5px;top:181px" width="7" height="4" viewBox="0 0 9 5"><path d="M0 0l4.500 5L9 0z" fill="#505050"/></svg>
</div>
<div class="abs" id="crumbs"><span style="left:7px"><i style="font-style:normal" class="cp">html</i></span><span style="left:45px"><i style="font-style:normal" class="cp">body</i></span><span style="left:86px"><i style="font-style:normal" class="cp">div</i><i style="font-style:normal" class="">#app</i></span><span style="left:143px"><i style="font-style:normal" class="cp">section</i><i style="font-style:normal" class="co">.el-container.is-vertical</i></span><span style="left:314px"><i style="font-style:normal" class="cp">main</i><i style="font-style:normal" class="co">.el-main</i></span><span style="left:397px"><i style="font-style:normal" class="cp">main</i><i style="font-style:normal" class="co">.el-main</i></span><span style="left:480px"><i style="font-style:normal" class="cp">div</i></span><span style="left:510px"><i style="font-style:normal" class="cp">div</i></span><span style="left:540px"><i style="font-style:normal" class="cp">div</i><i style="font-style:normal" class="co">.el-scrollbar</i></span><span style="left:624px;width:127px;height:23px;background:#f0f0f0"></span><span style="left:631px;color:#333">div.el-scrollbar__wrap</span></div>

<div class="abs" id="sty">
<div class="abs" style="left:0;top:0;width:324px;height:27px;background:#f3f3f3;border-bottom:1px solid #cdcdcd"></div>
<span class="abs tb" style="left:9px;top:6px;color:#333;letter-spacing:-.33px">Styles</span>
<span class="abs tb" style="left:59px;top:6px">Computed</span>
<span class="abs tb" style="left:135px;top:6px;letter-spacing:-.31px">Event Listeners</span>
<svg class="abs" style="left:232px;top:9px" width="9" height="8" viewBox="0 0 9 8"><path d="M.500 .500l3.500 3.500-3.500 3.500M4.500 .500l3.500 3.500-3.500 3.500" fill="none" stroke="#5f6368" stroke-width="1.100"/></svg>
<div class="abs" style="left:0;top:25px;width:50px;height:2px;background:#1a73e8"></div>
<div class="abs" style="left:0;top:27px;width:324px;height:27px;background:#f3f3f3;border-bottom:1px solid #cdcdcd"></div>
<div class="abs" style="left:3px;top:31px;width:196px;height:19px;background:#fff"></div>
<span class="abs" style="left:7px;top:33px;line-height:16px;color:#777;font-size:12px">Filter</span>
<span class="mono" style="left:210px;top:34px;color:#5f6368;font-weight:bold">:hov</span>
<span class="mono" style="left:246px;top:34px;color:#5f6368;font-weight:bold">.cls</span>
<svg class="abs" style="left:286px;top:35px" width="16" height="16" viewBox="0 0 16 16"><path d="M5.500 0v11M0 5.500h11" stroke="#5f6368" stroke-width="1.300"/><path d="M15 10v5h-5z" fill="#5f6368"/></svg>
<!-- rules -->
<span class="mono" style="left:4px;top:57px;color:#5a5a5a">element.style <span style="color:#8a7a5a">{</span></span>
<span class="mono" style="left:22px;top:73px"><span class="red">margin-bottom</span><span style="color:#777">:</span> -17px;</span>
<span class="mono" style="left:22px;top:87px"><span class="red">margin-right</span><span style="color:#777">:</span> -17px;</span>
<span class="mono" style="left:4px;top:101px;color:#8a7a5a">}</span>
<div class="abs" style="left:0;top:119px;width:308px;height:1px;background:#cdcdcd"></div>
<span class="mono" style="left:4px;top:122px;color:#222">.el-scrollbar__wrap <span style="color:#8a7a5a">{</span></span>
<span class="mono" style="left:258px;top:122px;color:#666">&lt;style&gt;</span>
<span class="mono" style="left:22px;top:138px"><span class="red">overflow</span><span style="color:#777">:</span></span>
<svg class="abs" style="left:86px;top:141px" width="6" height="8" viewBox="0 0 6 8"><path d="M0 0l6 4-6 4z" fill="#727272"/></svg>
<span class="mono" style="left:96px;top:138px">scroll;</span>
<span class="mono" style="left:22px;top:152px"><span class="red">height</span><span style="color:#777">:</span> 100%;</span>
<span class="mono" style="left:4px;top:166px;color:#8a7a5a">}</span>
<div class="abs" style="left:0;top:184px;width:308px;height:32px;background:#fafafa;border-top:1px solid #cdcdcd"></div>
<span class="mono" style="left:4px;top:187px;color:#222;font-style:italic">div <span style="color:#8a7a5a">{</span></span>
<span class="mono" style="left:166px;top:187px;color:#666;font-style:italic">user agent stylesheet</span>
<span class="mono" style="left:22px;top:203px;font-style:italic"><span class="red">display</span><span style="color:#777">:</span> block;</span>
<!-- styles scrollbar -->
<div class="abs" style="left:307px;top:27px;width:17px;height:189px;background:#f1f1f1">
<svg class="abs" style="left:5px;top:6px" width="7" height="4" viewBox="0 0 9 5"><path d="M0 5L4.500 0 9 5z" fill="#a3a3a3"/></svg>
<div class="abs" style="left:2px;top:17px;width:13px;height:74px;background:#c1c1c1"></div>
<svg class="abs" style="left:5px;top:177px" width="7" height="4" viewBox="0 0 9 5"><path d="M0 0l4.500 5L9 0z" fill="#505050"/></svg>
</div>
</div>

</div>
<!-- red arrow -->
<svg class="abs" style="left:320px;top:720px" width="200" height="180" viewBox="320 720 200 180"><defs><linearGradient id="ag" gradientUnits="userSpaceOnUse" x1="507" y1="732" x2="470" y2="765"><stop offset="0" stop-color="#f83838" stop-opacity=".15"/><stop offset="1" stop-color="#f83838"/></linearGradient></defs><path d="M507.300 731.800L345 872.200 343.400 869.300 336.400 885.800 353.900 880.400 351.600 877.900 507.700 732.200z" fill="url(#ag)"/></svg>

</body>
</html>
